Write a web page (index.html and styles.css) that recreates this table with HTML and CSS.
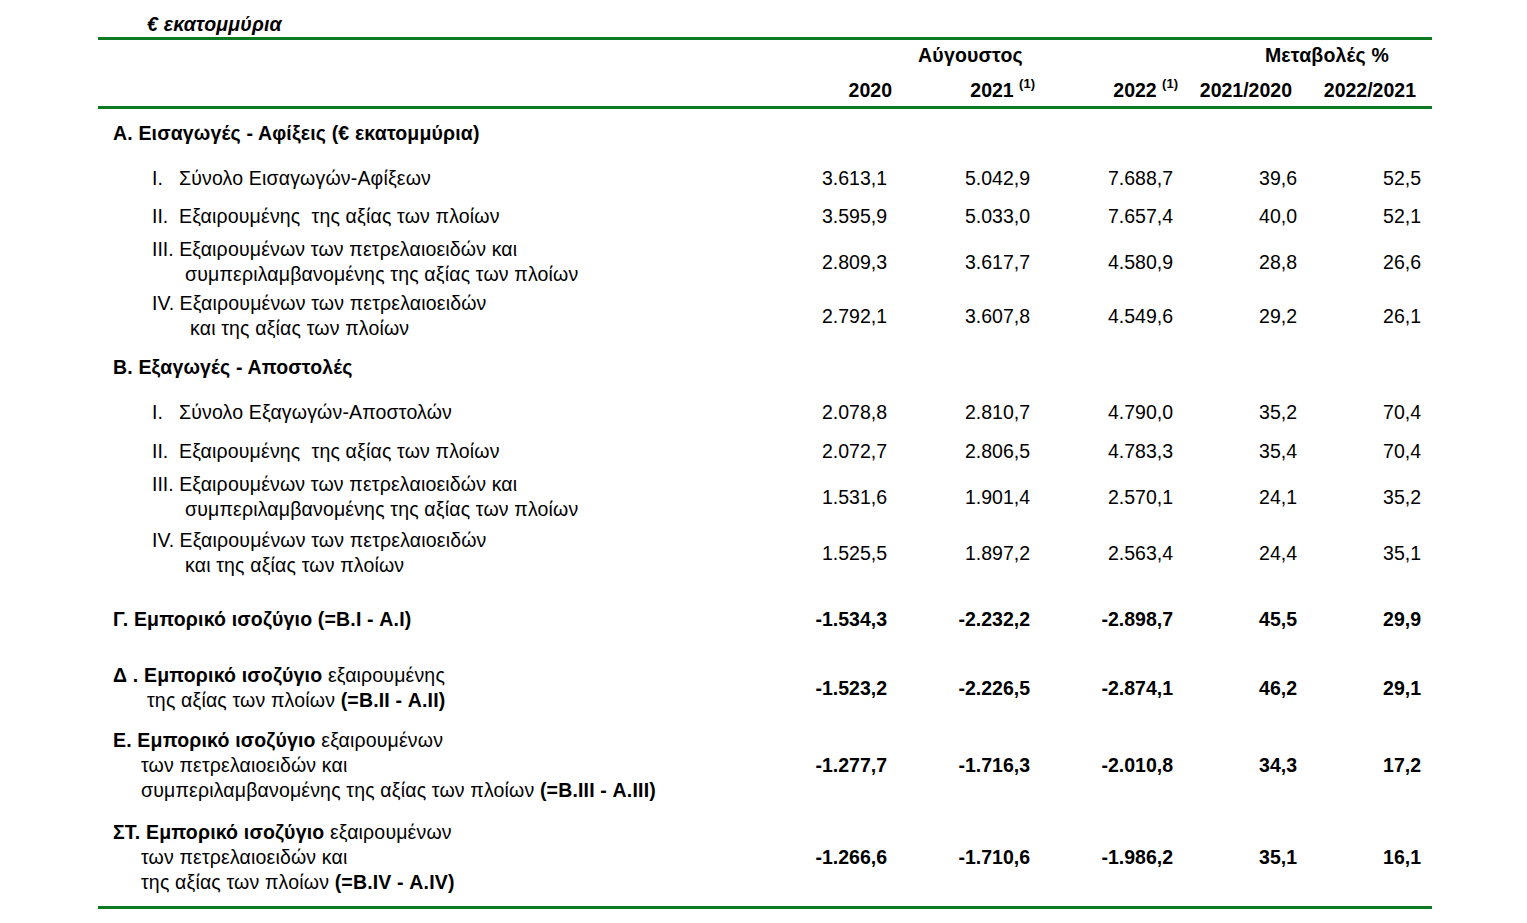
FILE: index.html
```html
<!DOCTYPE html>
<html lang="el">
<head>
<meta charset="utf-8">
<title>Εμπορικό ισοζύγιο</title>
<link rel="stylesheet" href="styles.css">
</head>
<body>
<div class="sheet">
  <div class="title">€ εκατομμύρια</div>
  <div class="rule"></div>

  <div class="row head1">
    <div class="span-aug">Αύγουστος</div>
    <div class="span-chg">Μεταβολές %</div>
  </div>
  <div class="row head2">
    <div class="lbl"></div>
    <div class="hv hv-a">2020</div>
    <div class="hv hv-a">2021 <sup>(1)</sup></div>
    <div class="hv hv-a">2022 <sup>(1)</sup></div>
    <div class="hv hv-b">2021/2020</div>
    <div class="hv hv-b">2022/2021</div>
  </div>
  <div class="rule"></div>

  <div class="row h48">
    <div class="lbl sec"><b>Α. Εισαγωγές - Αφίξεις (€ εκατομμύρια)</b></div>
  </div>

  <div class="row h42">
    <div class="lbl item"><span class="num">I.</span>Σύνολο Εισαγωγών-Αφίξεων</div>
    <div class="v">3.613,1</div><div class="v">5.042,9</div><div class="v">7.688,7</div><div class="v">39,6</div><div class="v">52,5</div>
  </div>
  <div class="row h34">
    <div class="lbl item"><span class="num">II.</span>Εξαιρουμένης&nbsp; της αξίας των πλοίων</div>
    <div class="v">3.595,9</div><div class="v">5.033,0</div><div class="v">7.657,4</div><div class="v">40,0</div><div class="v">52,1</div>
  </div>
  <div class="row h50 mt4">
    <div class="lbl">
      <div class="item"><span class="num num-w">III.</span>Εξαιρουμένων των πετρελαιοειδών και</div>
      <div class="cont87">συμπεριλαμβανομένης της αξίας των πλοίων</div>
    </div>
    <div class="v">2.809,3</div><div class="v">3.617,7</div><div class="v">4.580,9</div><div class="v">28,8</div><div class="v">26,6</div>
  </div>
  <div class="row h50 mt4">
    <div class="lbl">
      <div class="item"><span class="num num-w">IV.</span>Εξαιρουμένων των πετρελαιοειδών</div>
      <div class="cont92">και της αξίας των πλοίων</div>
    </div>
    <div class="v">2.792,1</div><div class="v">3.607,8</div><div class="v">4.549,6</div><div class="v">29,2</div><div class="v">26,1</div>
  </div>

  <div class="row h52">
    <div class="lbl sec"><b>Β. Εξαγωγές - Αποστολές</b></div>
  </div>

  <div class="row h38">
    <div class="lbl item"><span class="num">I.</span>Σύνολο Εξαγωγών-Αποστολών</div>
    <div class="v">2.078,8</div><div class="v">2.810,7</div><div class="v">4.790,0</div><div class="v">35,2</div><div class="v">70,4</div>
  </div>
  <div class="row h40">
    <div class="lbl item"><span class="num">II.</span>Εξαιρουμένης&nbsp; της αξίας των πλοίων</div>
    <div class="v">2.072,7</div><div class="v">2.806,5</div><div class="v">4.783,3</div><div class="v">35,4</div><div class="v">70,4</div>
  </div>
  <div class="row h50 mt1">
    <div class="lbl">
      <div class="item"><span class="num num-w">III.</span>Εξαιρουμένων των πετρελαιοειδών και</div>
      <div class="cont87">συμπεριλαμβανομένης της αξίας των πλοίων</div>
    </div>
    <div class="v">1.531,6</div><div class="v">1.901,4</div><div class="v">2.570,1</div><div class="v">24,1</div><div class="v">35,2</div>
  </div>
  <div class="row h50 mt6">
    <div class="lbl">
      <div class="item"><span class="num num-w">IV.</span>Εξαιρουμένων των πετρελαιοειδών</div>
      <div class="cont87">και της αξίας των πλοίων</div>
    </div>
    <div class="v">1.525,5</div><div class="v">1.897,2</div><div class="v">2.563,4</div><div class="v">24,4</div><div class="v">35,1</div>
  </div>

  <div class="row h82 strong">
    <div class="lbl sec"><b>Γ. Εμπορικό ισοζύγιο (=Β.I - Α.I)</b></div>
    <div class="v">-1.534,3</div><div class="v">-2.232,2</div><div class="v">-2.898,7</div><div class="v">45,5</div><div class="v">29,9</div>
  </div>

  <div class="row h50 mt3 strong">
    <div class="lbl">
      <div class="sec"><b>Δ . Εμπορικό ισοζύγιο</b> εξαιρουμένης</div>
      <div class="cont49">της αξίας των πλοίων <b>(=Β.II - Α.II)</b></div>
    </div>
    <div class="v">-1.523,2</div><div class="v">-2.226,5</div><div class="v">-2.874,1</div><div class="v">46,2</div><div class="v">29,1</div>
  </div>

  <div class="row h75 mt14 strong">
    <div class="lbl">
      <div class="sec"><b>Ε. Εμπορικό ισοζύγιο</b> εξαιρουμένων</div>
      <div class="cont43">των πετρελαιοειδών και</div>
      <div class="cont43">συμπεριλαμβανομένης της αξίας των πλοίων <b>(=Β.III - Α.III)</b></div>
    </div>
    <div class="v">-1.277,7</div><div class="v">-1.716,3</div><div class="v">-2.010,8</div><div class="v">34,3</div><div class="v">17,2</div>
  </div>

  <div class="row h75 mt17 strong">
    <div class="lbl">
      <div class="sec"><b>ΣΤ. Εμπορικό ισοζύγιο</b> εξαιρουμένων</div>
      <div class="cont43">των πετρελαιοειδών και</div>
      <div class="cont43">της αξίας των πλοίων <b>(=Β.IV - Α.IV)</b></div>
    </div>
    <div class="v">-1.266,6</div><div class="v">-1.710,6</div><div class="v">-1.986,2</div><div class="v">35,1</div><div class="v">16,1</div>
  </div>

  <div class="rule rule-end"></div>
</div>
</body>
</html>
```

FILE: styles.css
```css
html, body {
  margin: 0;
  padding: 0;
  background: #ffffff;
}

body {
  font-family: "Liberation Sans", Arial, "DejaVu Sans", sans-serif;
  font-size: 19.5px;
  color: #000000;
}

.sheet {
  width: 1334px;
  margin-left: 98px;
}

.title {
  padding: 12px 0 1px 49px;
  line-height: 24px;
  font-weight: bold;
  font-style: italic;
  letter-spacing: 0.2px;
}

.rule {
  height: 3px;
  background: #0b7a22;
}

.rule-end {
  margin-top: 11.5px;
}

.row {
  display: grid;
  grid-template-columns: 646px 143px 143px 143px 124px 124px;
  align-items: center;
  line-height: 25px;
}

.head1 {
  height: 30px;
  line-height: 30px;
  font-weight: bold;
}

.span-aug {
  grid-column: 2 / 5;
  text-align: center;
  padding-left: 24px;
  letter-spacing: 0.2px;
}

.span-chg {
  grid-column: 5 / 7;
  text-align: center;
  padding-left: 60px;
  letter-spacing: 0.2px;
}

.head2 {
  height: 28px;
  padding-top: 8px;
  align-items: start;
  line-height: 24px;
  font-weight: bold;
}

.hv {
  text-align: right;
  white-space: nowrap;
}

.hv-a {
  margin-right: -5px;
}

.hv-b {
  margin-right: 5px;
}

.hv sup {
  font-size: 13px;
  line-height: 0;
  vertical-align: 9px;
}

.v {
  text-align: right;
  white-space: nowrap;
}

.strong .v {
  font-weight: bold;
}

.lbl {
  white-space: nowrap;
  letter-spacing: 0.17px;
}

.sec {
  padding-left: 15px;
}

.item {
  padding-left: 54px;
}

.num {
  display: inline-block;
  width: 27px;
  letter-spacing: 0;
}

.num-w {
  width: auto;
  margin-right: 0.28em;
}

.cont87 { padding-left: 87px; }
.cont92 { padding-left: 92px; }
.cont49 { padding-left: 49px; }
.cont43 { padding-left: 43px; }

.h34 { height: 34px; }
.h38 { height: 38px; }
.h40 { height: 40px; }
.h42 { height: 42px; }
.h48 { height: 48px; }
.h50 { height: 50px; }
.h52 { height: 52px; }
.h75 { height: 75px; }
.h82 { height: 82px; }

.mt1 { margin-top: 1px; }
.mt3 { margin-top: 3px; }
.mt4 { margin-top: 4px; }
.mt6 { margin-top: 6px; }
.mt14 { margin-top: 14.5px; }
.mt17 { margin-top: 17px; }
```
